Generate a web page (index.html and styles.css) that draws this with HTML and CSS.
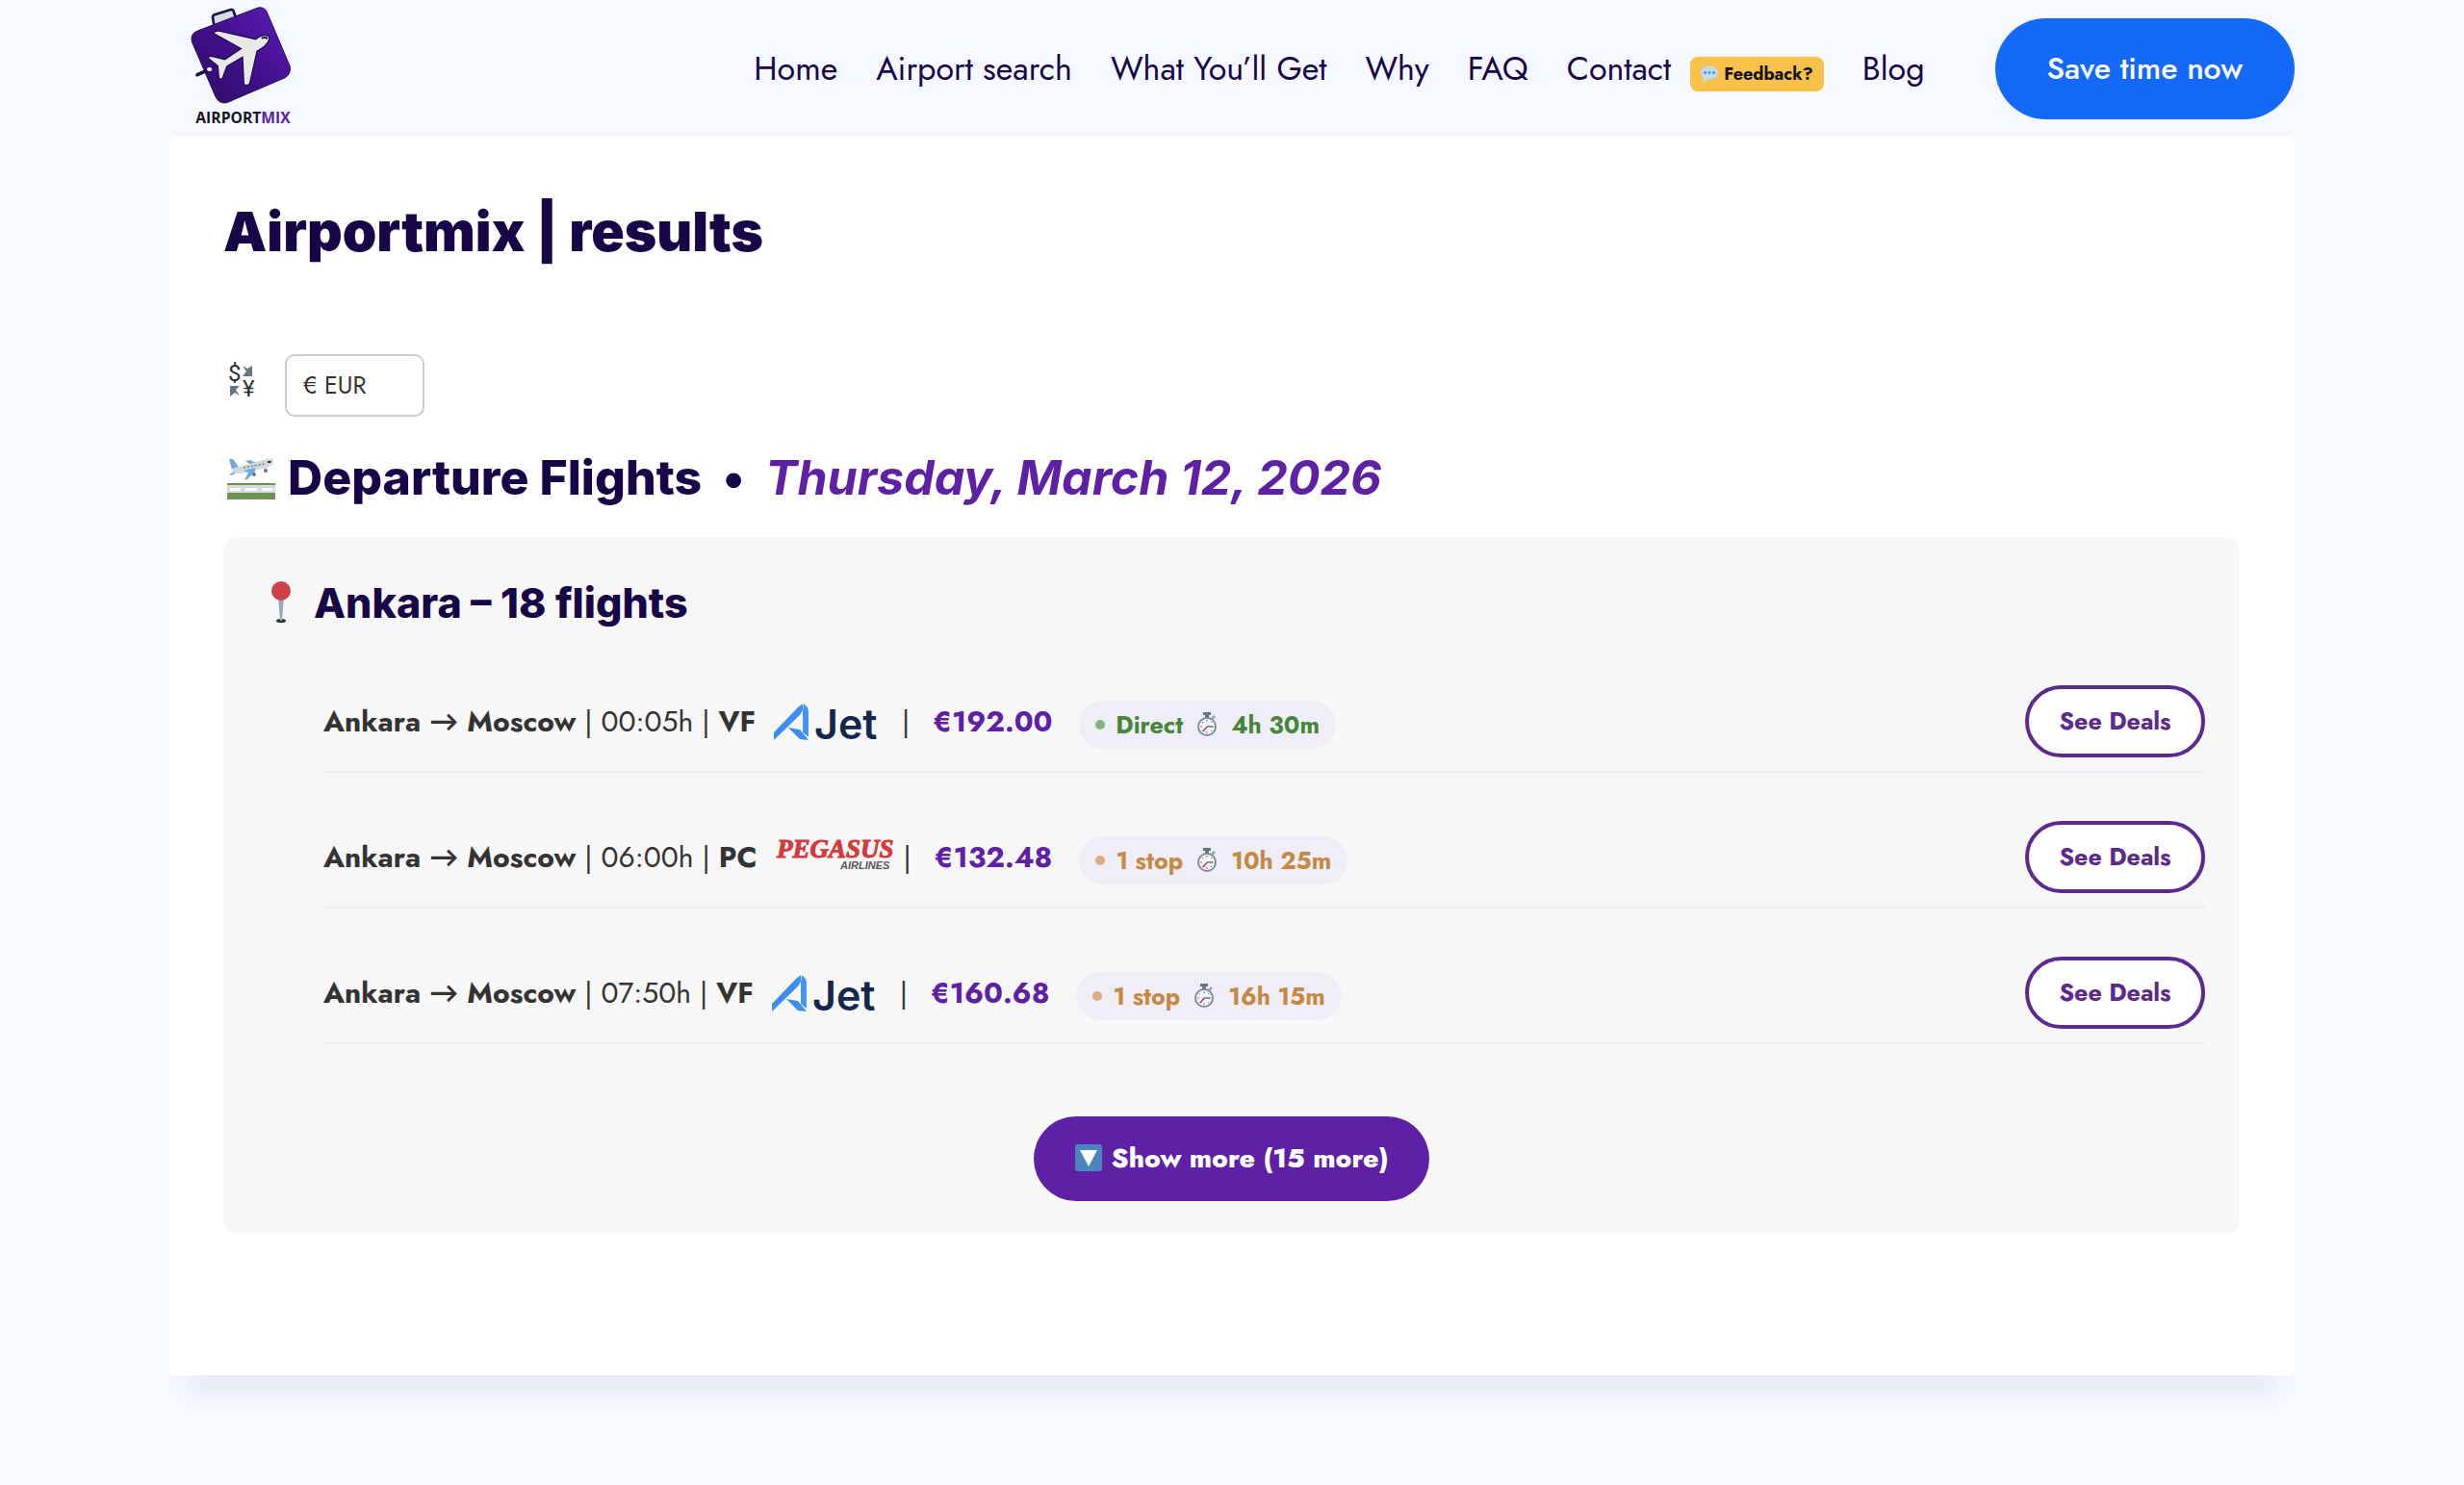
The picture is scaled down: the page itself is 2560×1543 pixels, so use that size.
FILE: index.html
```
<!DOCTYPE html>
<html lang="en">
<head>
  <meta charset="UTF-8">
  <meta name="viewport" content="width=device-width, initial-scale=1.0">
  <title>Airportmix | results</title>
  <link rel="stylesheet" href="styles.css">
</head>
<body>
  <!-- shared icons -->
  <svg class="sprite" aria-hidden="true">
    <linearGradient id="ajetBlue" x1="0" y1="0" x2="1" y2="1">
      <stop offset="0" stop-color="#2f7fe6"/>
      <stop offset="1" stop-color="#4a9bf5"/>
    </linearGradient>
    <symbol id="ajet" viewBox="0 0 112 42">
      <path fill="url(#ajetBlue)" d="M1 39V31L26 5 31 1V8L28 13Z"/>
      <path fill="#4595f0" d="M32 1 36 5 37 9V36L31 31V9Z"/>
      <path fill="#3d8cec" d="M16 26 28 28 37 39 28 38Z"/>
    </symbol>
    <symbol id="stopwatch" viewBox="0 0 22 26">
      <path fill="#66757f" d="M7 0h8v3h-2v3H9V3H7z"/>
      <path stroke="#99aab5" stroke-width="3" d="M16 7l3-3"/>
      <circle cx="11" cy="15" r="9" fill="#f5f8fa" stroke="#7f8d98" stroke-width="2"/>
      <path stroke="#66757f" stroke-width="1" d="M11 8v2M11 20v2M4 15h2M16 15h2M6 10l1 1M16 10l-1 1M6 20l1-1M16 20l-1-1"/>
      <path fill="none" stroke="#66757f" stroke-width="1.5" d="M11 15h6"/>
      <path stroke="#dd2e44" stroke-width="1.5" d="M11 15l-4 5"/>
    </symbol>
  </svg>

  <header class="site-header">
    <a href="#" class="logo" aria-label="Airportmix">
      <svg viewBox="115 15 315 375" width="105" height="125">
        <linearGradient id="bagFill" x1="1" y1="0" x2="0" y2="1">
          <stop offset="0" stop-color="#5f1db8"/>
          <stop offset="0.5" stop-color="#42108c"/>
          <stop offset="1" stop-color="#2d0a63"/>
        </linearGradient>
        <path d="M188 78 184 54 Q184 48 190 46L240 30Q247 29 249 35L255 52" fill="#d9dcea" stroke="#1c1342" stroke-width="8"/>
        <path d="M135 97 325 24Q345 20 353 38L424 205Q430 228 410 242L228 320Q205 325 193 302L119 130Q114 106 135 97Z" fill="url(#bagFill)" stroke="#2a0b5c" stroke-width="3"/>
        <path d="M185 103Q192 95 207 97L318 122Q340 104 358 112 366 124 345 145L322 160 299 262Q290 270 281 262L277 178 228 207 215 243Q208 250 203 243L200 206 168 180Q172 174 182 176L222 185 272 152Z" fill="#e8e8e4" stroke="#24085a" stroke-width="4"/>
        <path d="M335 117Q345 111 356 116L354 123Q344 118 337 122Z" fill="#1c1342"/>
        <path d="M136 233 178 215" stroke="#1c1342" stroke-width="11" stroke-linecap="round"/>
        <ellipse cx="174" cy="216" rx="8" ry="6" fill="#fff"/>
        <text x="131" y="383" class="logo-text">AIRPORT<tspan fill="#5323a8">MIX</tspan></text>
      </svg>
    </a>
    <nav>
      <ul class="menu">
        <li><a href="#">Home</a></li>
        <li><a href="#">Airport search</a></li>
        <li><a href="#">What You’ll Get</a></li>
        <li><a href="#">Why</a></li>
        <li><a href="#">FAQ</a></li>
        <li class="contact">
          <a href="#">Contact</a>
          <a href="#" class="feedback">
            <svg viewBox="0 0 36 36" width="18" height="18">
              <path fill="#bdddf4" d="M18 1C8 1 0 7 0 15c0 6 4 9 7 11-1 3-3 6-5 9 7-1 11-4 13-6h3c10 0 18-6 18-14S28 1 18 1z"/>
              <g fill="#5b8fb9"><circle cx="9" cy="15" r="3"/><circle cx="18" cy="15" r="3"/><circle cx="27" cy="15" r="3"/></g>
            </svg>
            Feedback?
          </a>
        </li>
        <li><a href="#">Blog</a></li>
      </ul>
    </nav>
    <a href="#" class="cta">Save time now</a>
  </header>

  <main class="card">
    <h1>Airportmix | results</h1>

    <form class="currency">
      <label for="currency" aria-label="Currency">
        <svg viewBox="0 0 30 36" width="30" height="36">
          <text x="0" y="18" class="money">$</text>
          <text x="15" y="34" class="money">¥</text>
          <path fill="#66757f" d="M15 2 20 5 25 2V13H15L19 8ZM2 23H12L8 27 12 33 7 30 2 34Z"/>
        </svg>
      </label>
      <select id="currency">
        <option>€ EUR</option>
        <option>$ USD</option>
        <option>£ GBP</option>
      </select>
    </form>

    <h2>
      <svg viewBox="0 0 50 44" width="50" height="44">
        <path fill="#6c9450" d="M0 26h50v17H0z"/>
        <path fill="#d3dbe0" d="M0 28h50v8H0z"/>
        <path fill="#fff" d="M3 31h11v3H3zM19 31h12v3H19zM36 31h11v3H36z"/>
        <path fill="#6aaae6" d="M2 1 6 1 12 9 5 12ZM2 17 9 13 13 12 5 18ZM19 3 24 2 32 6 26 8Z"/>
        <path fill="#d2d7dc" d="M5 11 34 3Q45-1 48 2 50 6 42 10L13 16Q6 16 5 11Z"/>
        <path fill="#6aaae6" d="M17 13 29 10 29 14 21 22 18 23 22 15Z"/>
        <path fill="#31373d" d="M42 3 46 3 45 5 42 5Z"/>
        <path stroke="#66757f" stroke-width="1.5" stroke-dasharray="2 2" d="M17 10 38 6"/>
        <circle cx="40" cy="13" r="2" fill="#66757f"/>
        <circle cx="28" cy="17" r="2" fill="#66757f"/>
      </svg>
      Departure Flights
      <span class="bullet">•</span>
      <em>Thursday, March 12, 2026</em>
    </h2>

    <section class="city">
      <h3>
        <svg viewBox="0 0 36 44" width="36" height="44">
          <ellipse cx="18" cy="41" rx="5" ry="2" fill="#292f33"/>
          <path fill="#99aab5" d="M15 16h6l-2 25h-2z"/>
          <circle cx="18" cy="10" r="10" fill="#cc4048"/>
        </svg>
        Ankara – 18 flights
      </h3>

      <ul class="flights">
        <li>
          <p class="route"><b>Ankara → Moscow</b> | 00:05h | <b>VF</b></p>
          <svg class="airline" viewBox="0 0 112 42" width="112" height="42" role="img" aria-label="AJet">
            <use href="#ajet" width="112" height="42"/>
            <text x="43" y="38" class="ajet-text">Jet</text>
          </svg>
          <span class="bar">|</span>
          <b class="price">€192.00</b>
          <span class="pill direct"><i class="dot"></i>Direct <svg width="22" height="26"><use href="#stopwatch"/></svg> 4h 30m</span>
          <button type="button" class="deals">See Deals</button>
        </li>
        <li>
          <p class="route"><b>Ankara → Moscow</b> | 06:00h | <b>PC</b></p>
          <svg class="airline pegasus" viewBox="0 0 126 42" width="126" height="42" role="img" aria-label="Pegasus Airlines">
            <text x="1" y="21" class="peg-top">PEGASUS</text>
            <text x="67" y="33" class="peg-sub">AIRLINES</text>
          </svg>
          <span class="bar">|</span>
          <b class="price">€132.48</b>
          <span class="pill stops"><i class="dot"></i>1 stop <svg width="22" height="26"><use href="#stopwatch"/></svg> 10h 25m</span>
          <button type="button" class="deals">See Deals</button>
        </li>
        <li>
          <p class="route"><b>Ankara → Moscow</b> | 07:50h | <b>VF</b></p>
          <svg class="airline" viewBox="0 0 112 42" width="112" height="42" role="img" aria-label="AJet">
            <use href="#ajet" width="112" height="42"/>
            <text x="43" y="38" class="ajet-text">Jet</text>
          </svg>
          <span class="bar">|</span>
          <b class="price">€160.68</b>
          <span class="pill stops"><i class="dot"></i>1 stop <svg width="22" height="26"><use href="#stopwatch"/></svg> 16h 15m</span>
          <button type="button" class="deals">See Deals</button>
        </li>
      </ul>

      <button type="button" class="show-more">
        <svg viewBox="0 0 28 28" width="28" height="28">
          <rect width="28" height="28" rx="3" fill="#4a86bd"/>
          <path fill="#fff" d="M5 6h18l-9 17z"/>
        </svg>
        Show more (15 more)
      </button>
    </section>
  </main>
</body>
</html>
```
FILE: styles.css
```
* {
  box-sizing: border-box;
}

body {
  font-family: 'Jost', 'Lato', sans-serif;
  background-color: #f5f8ff;
  color: #333;
  margin: 0;
  padding: 0 176px 100px;
}

a {
  color: inherit;
  text-decoration: none;
}

ul {
  list-style: none;
  margin: 0;
  padding: 0;
}

svg {
  overflow: visible;
}

.sprite {
  position: absolute;
  width: 0;
  height: 0;
}

/* Header */
.site-header {
  display: flex;
  align-items: center;
  height: 142px;
  color: #170548;
}

.logo {
  margin-left: 22px;
  margin-bottom: 8px;
}

.logo svg {
  display: block;
}

.logo-text {
  font-family: 'Open Sans', sans-serif;
  font-size: 47px;
  font-weight: 700;
  fill: #15131c;
}

.site-header nav {
  margin-left: auto;
}

.menu {
  display: flex;
  align-items: center;
  gap: 40px;
  font-size: 34px;
}

.contact {
  display: flex;
  align-items: center;
  gap: 20px;
}

.feedback {
  display: flex;
  align-items: center;
  gap: 6px;
  height: 36px;
  margin-top: 12px;
  padding: 0 11px;
  background-color: #f8c24a;
  border-radius: 8px;
  color: #111;
  font-size: 18px;
  font-weight: 700;
}

.cta {
  margin-left: 73px;
  padding: 0 54px;
  line-height: 105px;
  background-color: #1469f8;
  border-radius: 53px;
  color: #fff;
  font-size: 32px;
  font-weight: 500;
}

/* Results card */
.card {
  padding: 64px 57px 147px 56px;
  background-color: #fff;
  border-radius: 6px;
  box-shadow: 0 40px 20px -20px #e8ecf3;
}

h1, h2, h3 {
  margin: 0;
  font-family: 'Inter', sans-serif;
  font-weight: 800;
  color: #170548;
}

h1 {
  font-size: 57px;
  line-height: 70px;
  font-weight: 900;
}

.currency {
  display: flex;
  align-items: center;
  gap: 29px;
  margin: 92px 0 33px 5px;
}

.currency label {
  margin-bottom: 10px;
}

.currency label svg {
  display: block;
}

.money {
  font-family: 'Roboto', sans-serif;
  font-size: 24px;
  fill: #292f33;
}

.currency select {
  appearance: none;
  width: 145px;
  height: 65px;
  padding: 0 17px 2px;
  background-color: #fff;
  border: 2px solid #ccc;
  border-radius: 10px;
  color: #333;
  font-family: inherit;
  font-size: 25px;
}

h2 {
  display: flex;
  align-items: center;
  font-size: 50px;
  line-height: 60px;
}

h2 svg {
  margin: 4px 13px 0 4px;
}

.bullet {
  margin: 0 22px;
}

h2 em {
  font-weight: 700;
  color: #5e20a4;
}

/* City block */
.city {
  margin-top: 33px;
  padding: 40px 36px 34px;
  background-color: #f7f7f7;
  border-radius: 14px;
}

h3 {
  display: flex;
  align-items: center;
  gap: 16px;
  margin-left: 6px;
  font-size: 43px;
  line-height: 54px;
}

.flights {
  margin: 9px 0 75px 68px;
}

.flights li {
  display: flex;
  align-items: center;
  padding: 50px 0 14px;
  border-bottom: 2px solid #eeefef;
  font-size: 30px;
}

.route {
  margin: 0;
}

.airline {
  margin: 2px 22px 0 18px;
}

.pegasus {
  margin: 0 7px 0 19px;
}

.ajet-text {
  font-family: 'Inter', sans-serif;
  font-size: 43px;
  font-weight: 600;
  fill: #14284b;
}

.peg-top {
  font-family: 'Liberation Serif', serif;
  font-size: 27px;
  font-weight: 700;
  font-style: italic;
  fill: #d23a3c;
  stroke: #d23a3c;
}

.peg-sub {
  font-family: 'Liberation Sans', sans-serif;
  font-size: 11px;
  font-weight: 700;
  font-style: italic;
  fill: #555;
}

.price {
  margin: 0 28px 0 24px;
  color: #5e20a4;
}

.pill {
  display: flex;
  align-items: center;
  gap: 14px;
  height: 50px;
  margin-top: 6px;
  padding: 0 17px;
  background-color: #efeef6;
  border-radius: 25px;
  font-size: 25px;
  font-weight: 700;
}

.dot {
  width: 10px;
  height: 10px;
  margin-right: -3px;
  border-radius: 50%;
}

.direct {
  color: #47863a;
}

.direct .dot {
  background-color: #86b47c;
}

.stops {
  color: #c48a45;
}

.stops .dot {
  background-color: #d8ae80;
}

.deals {
  width: 187px;
  height: 75px;
  margin-left: auto;
  padding-bottom: 3px;
  background-color: #fff;
  border: 4px solid #5c2a8c;
  border-radius: 38px;
  color: #5c2a8c;
  font-family: inherit;
  font-size: 25px;
  font-weight: 700;
  cursor: pointer;
}

.show-more {
  display: flex;
  align-items: center;
  gap: 10px;
  height: 88px;
  margin: 0 auto;
  padding: 0 43px 2px;
  background-color: #5e20a4;
  border: none;
  border-radius: 44px;
  color: #fff;
  font-family: inherit;
  font-size: 28px;
  font-weight: 800;
  cursor: pointer;
}
```
